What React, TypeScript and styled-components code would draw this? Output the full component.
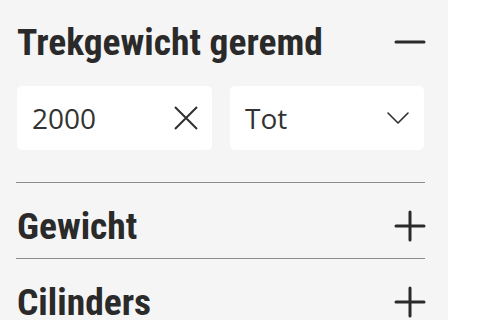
import React from 'react';
import styled, { createGlobalStyle } from 'styled-components';

const GlobalStyle = createGlobalStyle`
    html, body {
        margin: 0;
        padding: 0;
        background: #ffffff;
    }
`;

const Page = styled.div`
    width: 480px;
    height: 320px;
    overflow: hidden;
    background: #ffffff;
`;

const Sidebar = styled.aside`
    width: 448px;
    height: 320px;
    box-sizing: border-box;
    background: #f5f5f5;
    padding: 0 23px 0 16px;
`;

interface SectionProps {
    open?: boolean;
}

const Section = styled.section<SectionProps>`
    padding: ${({ open }) => open ? '24px 0 32px' : '25px 0 14px'};
    border-bottom: 1px solid #8c8c8c;
`;

const Header = styled.div`
    display: flex;
    align-items: center;
    justify-content: space-between;
    height: 36px;
`;

const Title = styled.h2`
    margin: 0 0 0 1px;
    font-family: "Roboto Condensed", "Liberation Sans Narrow", "DejaVu Sans Condensed", Roboto, sans-serif;
    font-weight: 700;
    font-size: 37.5px;
    line-height: 36px;
    color: #2a2a2a;
    white-space: nowrap;
`;

const Toggle = styled.button`
    display: flex;
    align-items: center;
    justify-content: center;
    width: 32px;
    height: 32px;
    margin-right: -1px;
    padding: 0;
    border: 0;
    background: none;
    color: #2a2a2a;
`;

const Fields = styled.div`
    display: grid;
    grid-template-columns: 195px 194px;
    gap: 18px;
    margin: 26px 0 0 1px;
`;

const Field = styled.div`
    display: flex;
    align-items: center;
    justify-content: space-between;
    height: 64px;
    box-sizing: border-box;
    padding: 0 14px 0 15px;
    background: #ffffff;
    border-radius: 5px;
    font-family: "Open Sans", "Noto Sans", sans-serif;
    font-size: 28px;
    color: #333333;
`;

const FieldIcon = styled.span`
    display: flex;
    align-items: center;
    color: #2f2f2f;
`;

const Minus = () => (
    <svg width="32" height="32" viewBox="0 0 32 32" fill="none" stroke="currentColor" strokeWidth="3" strokeLinecap="round">
        <path d="M2 16h28" />
    </svg>
);

const Plus = () => (
    <svg width="32" height="32" viewBox="0 0 32 32" fill="none" stroke="currentColor" strokeWidth="3" strokeLinecap="round">
        <path d="M2 16h28M16 2v28" />
    </svg>
);

const Cross = () => (
    <svg width="24" height="24" viewBox="0 0 24 24" fill="none" stroke="currentColor" strokeWidth="2">
        <path d="M1 1l22 22M23 1L1 23" />
    </svg>
);

const Chevron = () => (
    <svg width="24" height="14" viewBox="0 0 24 14" fill="none" stroke="currentColor" strokeWidth="1.6" strokeLinecap="round" strokeLinejoin="round">
        <path d="M2 2l10 10 10-10" />
    </svg>
);

const filters = ['Gewicht', 'Cilinders'];

export default function App() {
    return (
        <Page>
            <GlobalStyle />
            <Sidebar>
                <Section open>
                    <Header>
                        <Title>Trekgewicht geremd</Title>
                        <Toggle><Minus /></Toggle>
                    </Header>
                    <Fields>
                        <Field>
                            <span>2000</span>
                            <FieldIcon><Cross /></FieldIcon>
                        </Field>
                        <Field>
                            <span>Tot</span>
                            <FieldIcon><Chevron /></FieldIcon>
                        </Field>
                    </Fields>
                </Section>
                {filters.map((title) => (
                    <Section key={title}>
                        <Header>
                            <Title>{title}</Title>
                            <Toggle><Plus /></Toggle>
                        </Header>
                    </Section>
                ))}
            </Sidebar>
        </Page>
    );
}
